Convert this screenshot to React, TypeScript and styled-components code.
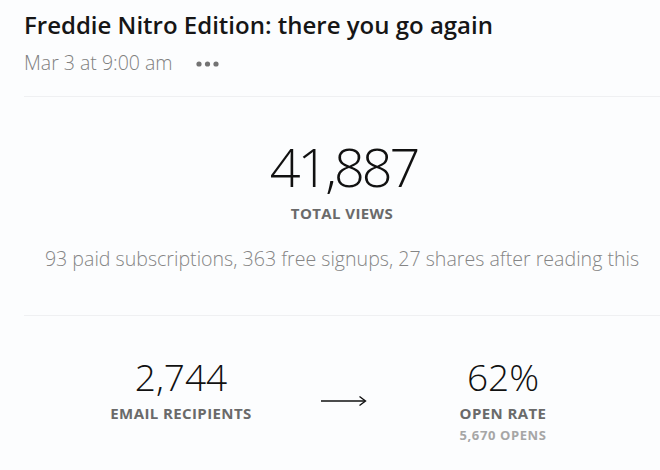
import React from "react";
import styled, { createGlobalStyle } from "styled-components";

const Global = createGlobalStyle`
  html, body { margin: 0; padding: 0; background: #fcfdfe; }
  body { font-family: "Open Sans", "Noto Sans", sans-serif; color: #111; }
`;

const Page = styled.div`
  width: 660px;
  height: 470px;
  padding-left: 24px;
  box-sizing: border-box;
  overflow: hidden;
`;

const Header = styled.header`
  padding-top: 9px;
  height: 97px;
  box-sizing: border-box;
  border-bottom: 1px solid #eff0f2;
`;

const Title = styled.h1`
  margin: 0;
  font-size: 24px;
  font-weight: 600;
  line-height: 32px;
  color: #161616;
`;

const Meta = styled.div`
  display: flex;
  align-items: center;
  gap: 23px;
  margin-top: 9px;
  font-size: 19.5px;
  font-weight: 300;
  color: #808080;
  line-height: 26px;
`;

const Dots = styled.svg`
  display: block;
  width: 23px;
  height: 6px;
  margin-top: 1px;
`;

const Hero = styled.section`
  height: 219px;
  box-sizing: border-box;
  border-bottom: 1px solid #eff0f2;
  display: flex;
  flex-direction: column;
  align-items: center;
  padding-top: 32px;
`;

const BigNumber = styled.div<{ $size: number; $spacing: number; $line: number }>`
  font-size: ${(p) => p.$size}px;
  font-weight: 300;
  line-height: ${(p) => p.$line}px;
  color: #111;
  letter-spacing: ${(p) => p.$spacing}px;
  margin-right: ${(p) => p.$spacing}px;
`;

const Label = styled.div<{ $gap: number }>`
  margin-top: ${(p) => p.$gap}px;
  font-size: 15px;
  line-height: 21px;
  font-weight: 700;
  color: #6a6a6a;
  letter-spacing: 0.4px;
`;

const Summary = styled.p`
  margin: 22px 0 0;
  font-size: 19.6px;
  line-height: 26px;
  font-weight: 300;
  color: #858585;
  white-space: nowrap;
`;

const Funnel = styled.section`
  display: grid;
  grid-template-columns: 161px 161px 161px;
  justify-content: center;
  padding-top: 36px;
`;

const Stat = styled.div`
  display: flex;
  flex-direction: column;
  align-items: center;
`;

const Sub = styled.div`
  margin-top: 3px;
  font-size: 13px;
  line-height: 16px;
  font-weight: 700;
  color: #a6a6a6;
  letter-spacing: 0.6px;
`;

const ArrowCell = styled.div`
  display: flex;
  justify-content: center;
  padding-top: 43px;
  padding-left: 4px;
`;

export default function App() {
  return (
    <>
      <Global />
      <Page>
        <Header>
          <Title>Freddie Nitro Edition: there you go again</Title>
          <Meta>
            <span>Mar 3 at 9:00 am</span>
            <Dots viewBox="0 0 23 6">
              <circle cx="3" cy="3" r="2.6" fill="#737373" />
              <circle cx="11.5" cy="3" r="2.6" fill="#737373" />
              <circle cx="20" cy="3" r="2.6" fill="#737373" />
            </Dots>
          </Meta>
        </Header>
        <Hero>
          <BigNumber $size={54} $spacing={-3} $line={74}>41,887</BigNumber>
          <Label $gap={0}>TOTAL VIEWS</Label>
          <Summary>93 paid subscriptions, 363 free signups, 27 shares after reading this</Summary>
        </Hero>
        <Funnel>
          <Stat>
            <BigNumber $size={37} $spacing={0} $line={50}>2,744</BigNumber>
            <Label $gap={1}>EMAIL RECIPIENTS</Label>
          </Stat>
          <ArrowCell>
            <svg width="46" height="12" viewBox="0 0 46 12">
              <line x1="0" y1="6" x2="44" y2="6" stroke="#111" strokeWidth="1.6" />
              <path d="M38.5 1.5 L44.5 6 L38.5 10.5" fill="none" stroke="#111" strokeWidth="1.4" />
            </svg>
          </ArrowCell>
          <Stat>
            <BigNumber $size={37} $spacing={0} $line={50}>62%</BigNumber>
            <Label $gap={1}>OPEN RATE</Label>
            <Sub>5,670 OPENS</Sub>
          </Stat>
        </Funnel>
      </Page>
    </>
  );
}
